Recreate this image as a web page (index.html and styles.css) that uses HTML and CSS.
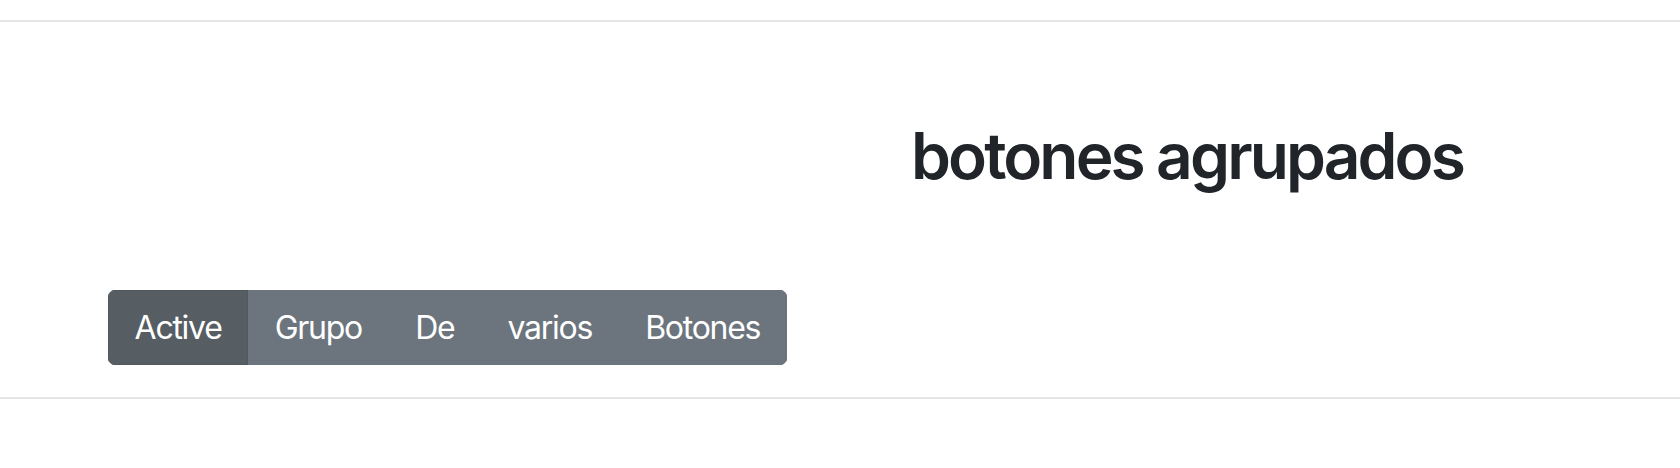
FILE: index.html
```html
<!DOCTYPE html>
<html lang="es">
<head>
<meta charset="utf-8">
<title>botones agrupados</title>
<link rel="stylesheet" href="styles.css">
</head>
<body>
<div class="page">
  <div class="rule"></div>
  <section class="demo">
    <div class="title-row">
      <div class="spacer"></div>
      <h1 class="title">botones agrupados</h1>
    </div>
    <div class="btn-group" role="group">
      <button class="btn active" type="button">Active</button>
      <button class="btn" type="button">Grupo</button>
      <button class="btn" type="button">De</button>
      <button class="btn" type="button">varios</button>
      <button class="btn" type="button">Botones</button>
    </div>
  </section>
  <div class="rule"></div>
</div>
</body>
</html>
```

FILE: styles.css
```css
* { box-sizing: border-box; }
html, body { margin: 0; padding: 0; background: #fff; }
body {
  font-family: Inter, "Liberation Sans", sans-serif;
  color: #212529;
}
.page {
  padding-top: 20px;
}
.rule {
  height: 2px;
  background: #e5e5e5;
}
.demo {
  display: flex;
  flex-direction: column;
  padding: 96px 0 32px 0;
}
.title-row {
  display: grid;
  grid-template-columns: 694px 1fr;
}
.title {
  margin: 0;
  font-size: 64px;
  font-weight: 600;
  line-height: 76.8px;
  letter-spacing: -0.045em;
  text-align: center;
  color: #212529;
}
.btn-group {
  display: inline-flex;
  align-self: flex-start;
  margin: 95px 0 0 108px;
  border-radius: 7px;
  overflow: hidden;
}
.btn {
  font-family: inherit;
  font-size: 32px;
  line-height: 48px;
  font-weight: 400;
  letter-spacing: -0.04em;
  color: #fff;
  background: #6c757d;
  border: 1.6px solid #6c757d;
  padding: 12.8px 25.6px;
  margin: 0;
  cursor: pointer;
}
.btn.active {
  background: #565e64;
  border-color: #51585e;
}
```
